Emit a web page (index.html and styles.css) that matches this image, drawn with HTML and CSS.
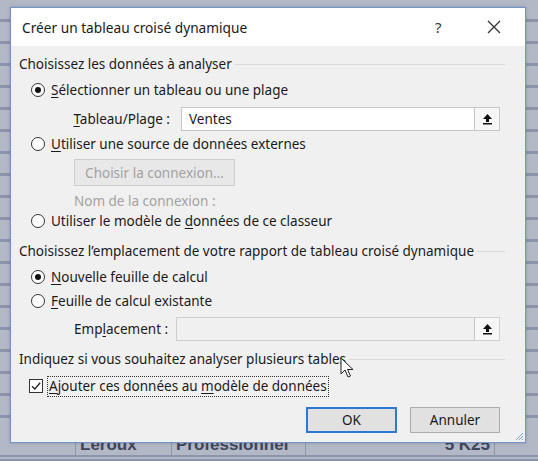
FILE: index.html
```html
<!DOCTYPE html>
<html lang="fr">
<head>
<meta charset="utf-8">
<title>Créer un tableau croisé dynamique</title>
<link rel="stylesheet" href="styles.css">
</head>
<body>
<div class="sheet">
  <div class="sheet-row">
    <span class="cell c0"></span>
    <span class="cell c1">Leroux</span>
    <span class="cell c2">Professionnel</span>
    <span class="cell c3">5 K25</span>
  </div>
</div>

<div class="dialog">
  <div class="titlebar">
    <span class="title">Créer un tableau croisé dynamique</span>
    <span class="help">?</span>
    <svg class="close" width="14" height="14" viewBox="0 0 14 14"><path d="M1 1 L13 13 M13 1 L1 13" stroke="#333" stroke-width="1.3" fill="none"/></svg>
  </div>
  <div class="body">
    <div class="group r-h1"><span>Choisissez les données à analyser</span><i class="rule"></i></div>
    <label class="opt r-o1"><span class="radio on"></span><span><u>S</u>électionner un tableau ou une plage</span></label>
    <div class="field r-f1">
      <span class="flabel right"><u>T</u>ableau/Plage :</span>
      <div class="input"><span class="val">Ventes</span><span class="pick"><svg width="11" height="12" viewBox="0 0 11 12"><path d="M5.5 1 L10 6 L7 6 L7 9 L4 9 L4 6 L1 6 Z" fill="#111"/><rect x="1" y="10" width="9" height="1.5" fill="#111"/></svg></span></div>
    </div>
    <label class="opt r-o2"><span class="radio"></span><span><u>U</u>tiliser une source de données externes</span></label>
    <div class="btn-dis r-b1">Choisir la connexion...</div>
    <div class="disabled-txt r-n1">Nom de la connexion :</div>
    <label class="opt r-o3"><span class="radio"></span><span>Utiliser le modèle de <u>d</u>onnées de ce classeur</span></label>

    <div class="group r-h2"><span>Choisissez l’emplacement de votre rapport de tableau croisé dynamique</span><i class="rule"></i></div>
    <label class="opt r-o4"><span class="radio on"></span><span><u>N</u>ouvelle feuille de calcul</span></label>
    <label class="opt r-o5"><span class="radio"></span><span><u>F</u>euille de calcul existante</span></label>
    <div class="field r-f2">
      <span class="flabel left">Emp<u>l</u>acement :</span>
      <div class="input dis"><span class="val"></span><span class="pick"><svg width="11" height="12" viewBox="0 0 11 12"><path d="M5.5 1 L10 6 L7 6 L7 9 L4 9 L4 6 L1 6 Z" fill="#111"/><rect x="1" y="10" width="9" height="1.5" fill="#111"/></svg></span></div>
    </div>

    <div class="group r-h3"><span>Indiquez si vous souhaitez analyser plusieurs tables</span><i class="rule"></i></div>
    <label class="opt chk r-c1"><span class="check"><svg width="12" height="12" viewBox="0 0 12 12"><path d="M2 6.2 L4.8 9 L10.2 2.8" stroke="#222" stroke-width="1.3" fill="none"/></svg></span><span class="focus"><u>A</u>jouter ces données au <u>m</u>odèle de données</span></label>

    <div class="actions">
      <button class="btn default">OK</button>
      <button class="btn">Annuler</button>
    </div>
  </div>
  <svg class="grip" width="10" height="10" viewBox="0 0 10 10"><path d="M9 2 L2 9 M9 5 L5 9 M9 8 L8 9" stroke="#8aa0bf" stroke-width="1"/></svg>
</div>

<svg class="cursor" width="14" height="22" viewBox="0 0 14 22"><path d="M1 1 L1 17 L5 13 L8 20 L10.5 19 L7.5 12.5 L13 12.5 Z" fill="#fff" stroke="#222" stroke-width="1"/></svg>
</body>
</html>
```

FILE: styles.css
```css
* { box-sizing: border-box; }
html, body { margin: 0; padding: 0; }
body {
  width: 538px;
  height: 461px;
  overflow: hidden;
  font-family: "Noto Sans", "Open Sans", sans-serif;
  font-size: 13.5px;
  color: #1a1a1a;
  background-color: #a3aabc;
  background-image:
    repeating-linear-gradient(to bottom, #b3b8c7 0px, #b3b8c7 19px, #8c94a9 19px, #8c94a9 22px);
  position: relative;
}
u { text-decoration: underline; text-underline-offset: 2px; }

.sheet {
  height: 461px;
  display: flex;
  flex-direction: column;
  justify-content: flex-end;
}
.sheet-row {
  height: 24px;
  margin-bottom: 4px;
  display: flex;
  align-items: flex-start;
  background: #b3b8c7;
  border-bottom: 2px solid #8c94a9;
  font-family: "Liberation Sans", sans-serif;
  font-size: 17px;
  line-height: 17px;
  font-weight: bold;
  color: #3f4558;
}
.cell { display: block; height: 100%; padding-top: 3px; border-right: 1px solid #8c94a9; }
.c0 { width: 76px; border-right: 1px solid #8c94a9; }
.c1 { width: 96px; padding-left: 4px; }
.c2 { width: 134px; padding-left: 4px; }
.c3 { width: 189px; text-align: right; padding-right: 4px; }

.dialog {
  position: absolute;
  left: 10px;
  top: 7px;
  width: 516px;
  height: 436px;
  background: #f0f0f0;
  border: 1px solid #7396c6;
  box-shadow: 0 0 3px rgba(60, 70, 100, 0.35);
  display: flex;
  flex-direction: column;
}
.titlebar {
  height: 38px;
  background: #ffffff;
  display: flex;
  align-items: center;
  padding-left: 11px;
  flex-shrink: 0;
}
.title { font-size: 13.7px; color: #1a1a1a; flex: 1; }
.help { font-size: 15px; width: 14px; margin-right: 38px; color: #333; }
.close { margin-right: 24px; }

.body {
  flex: 1;
  padding: 0 20px 0 8px;
  display: flex;
  flex-direction: column;
}
.group { display: flex; align-items: center; height: 20px; white-space: nowrap; }
.rule { flex: 1; height: 1px; background: #dadada; margin-left: 3px; }

.opt { display: flex; align-items: center; height: 20px; padding-left: 12px; white-space: nowrap; }
.radio {
  width: 14px; height: 14px; border-radius: 50%;
  border: 1px solid #333; background: #fff;
  margin-right: 6px; position: relative; flex-shrink: 0;
}
.radio.on::after {
  content: ""; position: absolute; left: 3px; top: 3px;
  width: 6px; height: 6px; border-radius: 50%; background: #111;
}
.check {
  width: 14px; height: 14px; border: 1px solid #333; background: #fff;
  margin-left: -1px; margin-right: 4px; display: flex; align-items: center; justify-content: center; flex-shrink: 0;
}
.focus { border: 1px dotted #333; padding: 0 1px 1px 1px; }

.field { display: flex; align-items: center; height: 25px; padding-right: 5px; }
.flabel { flex-shrink: 0; white-space: nowrap; }
.flabel.right { width: 151px; text-align: right; margin-right: 11px; }
.flabel.left { width: 157px; padding-left: 55px; }
.input {
  flex: 1; height: 24px; background: #fff; border: 1px solid #c6c6c6;
  display: flex; align-items: stretch;
}
.input.dis { background: #f0f0f0; border-color: #cfcfcf; }
.val { flex: 1; padding-left: 7px; display: flex; align-items: center; }
.pick {
  width: 25px; border-left: 1px solid #c6c6c6; background: #f7f7f7;
  display: flex; align-items: center; justify-content: center;
}

.btn-dis {
  margin-left: 55px; width: 161px; height: 27px;
  background: #e8e8e8; border: 1px solid #cdcdcd; color: #a2a2a2;
  display: flex; align-items: center; justify-content: center;
}
.disabled-txt { margin-left: 55px; height: 20px; display: flex; align-items: center; color: #a2a2a2; }

.r-h1 { margin-top: 8px; }
.r-o1 { margin-top: 6px; }
.r-f1 { margin-top: 6px; }
.r-o2 { margin-top: 3px; }
.r-b1 { margin-top: 5px; }
.r-n1 { margin-top: 5px; }
.r-o3 { margin-top: 0; }
.r-h2 { margin-top: 10px; }
.r-o4 { margin-top: 6px; }
.r-o5 { margin-top: 4px; }
.r-f2 { margin-top: 5px; }
.r-h3 { margin-top: 8px; }
.r-c1 { margin-top: 7px; padding-left: 11px; }

.actions { display: flex; justify-content: flex-end; gap: 13px; margin-top: 11px; padding-right: 5px; }
.btn {
  font-family: inherit; font-size: 13.5px; color: #1a1a1a;
  width: 90px; height: 26px; background: #e1e1e1; border: 1px solid #adadad; padding: 0;
}
.btn.default { width: 91px; border: 2px solid #2e78cf; }

.grip { position: absolute; right: 1px; bottom: 1px; }
.cursor { position: absolute; left: 340px; top: 357px; }
```
